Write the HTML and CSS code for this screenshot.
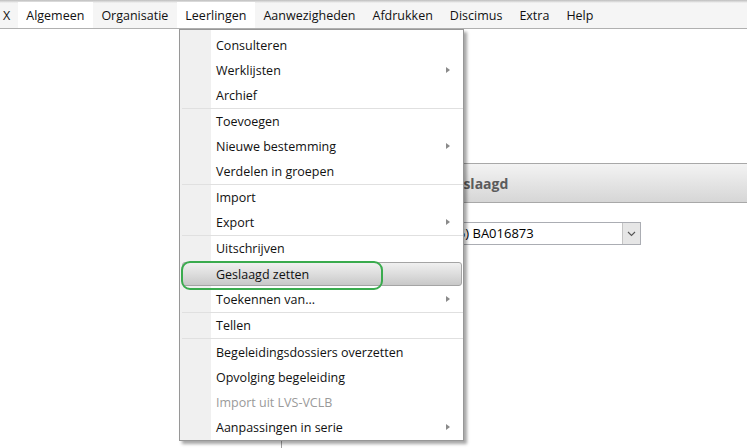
FILE: index.html
```html
<!DOCTYPE html>
<html lang="nl">
<head>
  <meta charset="UTF-8" />
  <title>Leerlingen - Geslaagd zetten</title>
  <link rel="stylesheet" href="styles.css">
</head>
<body>
  <div class="menubar">
    <span class="menubar-item close">X</span>
    <span class="menubar-item is-hover">Algemeen</span>
    <span class="menubar-item">Organisatie</span>
    <span class="menubar-item is-open">Leerlingen</span>
    <span class="menubar-item">Aanwezigheden</span>
    <span class="menubar-item">Afdrukken</span>
    <span class="menubar-item">Discimus</span>
    <span class="menubar-item">Extra</span>
    <span class="menubar-item">Help</span>
  </div>

  <div class="workspace">
    <div class="panel">
      <div class="panel-header"><span class="panel-title">Geslaagd</span></div>
      <div class="panel-body">
        <div class="combo">
          <span class="combo-text">(6) BA016873</span>
          <span class="combo-button">
            <svg width="9" height="6" viewBox="0 0 9 6"><path d="M1 1 L4.5 4.5 L8 1" fill="none" stroke="#555" stroke-width="1.1"/></svg>
          </span>
        </div>
      </div>
    </div>
  </div>

  <!-- opened dropdown of "Leerlingen" -->
  <div class="popup">
    <div class="item">Consulteren</div>
    <div class="item has-sub">Werklijsten</div>
    <div class="item">Archief</div>
    <div class="sep"></div>
    <div class="item">Toevoegen</div>
    <div class="item has-sub">Nieuwe bestemming</div>
    <div class="item">Verdelen in groepen</div>
    <div class="sep"></div>
    <div class="item">Import</div>
    <div class="item has-sub">Export</div>
    <div class="sep"></div>
    <div class="item">Uitschrijven</div>
    <div class="item is-active">Geslaagd zetten</div>
    <div class="item has-sub">Toekennen van...</div>
    <div class="sep"></div>
    <div class="item">Tellen</div>
    <div class="sep wide"></div>
    <div class="item">Begeleidingsdossiers overzetten</div>
    <div class="item">Opvolging begeleiding</div>
    <div class="item is-disabled">Import uit LVS-VCLB</div>
    <div class="item has-sub">Aanpassingen in serie</div>
  </div>

  <div class="annotation"></div>
</body>
</html>
```

FILE: styles.css
```css
html, body {
  margin: 0;
  height: 448px;
  overflow: hidden;
  background: #fff;
  font-family: "Open Sans", "Noto Sans", sans-serif;
  font-size: 12.5px;
  color: #111;
}

/* menu bar */
.menubar {
  display: flex;
  height: 29px;
  box-sizing: border-box;
  padding-top: 2px;
  background: linear-gradient(#bdbdbd 0, #e2e2e2 2px, #f5f5f5 3px, #f5f5f5);
  border-bottom: 1px solid #b0b0b0;
}
.menubar-item {
  height: 26px;
  line-height: 28px;
  padding: 0 9px 0 8px;
  white-space: nowrap;
}
.menubar-item.close {
  padding: 0 8px 0 3px;
}
.menubar-item.is-hover,
.menubar-item.is-open {
  background: #fff;
}

/* page behind the menu */
.workspace {
  padding: 134px 0 0 281px;
}
.panel {
  border-left: 1px solid #a0a0a0;
  height: 300px;
}
.panel-header {
  height: 38px;
  border-top: 1px solid #a8a8a8;
  border-bottom: 1px solid #a8a8a8;
  background: linear-gradient(#f3f3f3, #d6d6d6);
  display: flex;
  align-items: center;
  padding-left: 163px;
}
.panel-title {
  font-weight: bold;
  font-size: 14px;
  color: #5c5c5c;
}
.panel-body {
  padding: 19px 0 0 169px;
}
.combo {
  display: flex;
  width: 190px;
  height: 23px;
  box-sizing: border-box;
  border: 1px solid #abadb3;
  background: #fff;
}
.combo-text {
  flex: 1;
  line-height: 20px;
  padding-left: 2px;
  font-size: 13px;
  color: #000;
}
.combo-button {
  width: 17px;
  display: flex;
  align-items: center;
  justify-content: center;
  background: #e6e6e6;
  border-left: 1px solid #c4c4c4;
}

/* dropdown */
.popup {
  position: absolute;
  left: 179px;
  top: 29px;
  width: 285px;
  box-sizing: border-box;
  padding-top: 3px;
  border: 1px solid #979797;
  background: linear-gradient(90deg, #f0f0f0 31px, #fff 31px);
  box-shadow: 3px 3px 3px rgba(0, 0, 0, 0.35);
}
.item {
  position: relative;
  height: 25px;
  line-height: 25px;
  padding-left: 36px;
  white-space: nowrap;
}
.item.has-sub::after {
  content: "";
  position: absolute;
  right: 13px;
  top: 9px;
  border-left: 4px solid #8a8a8a;
  border-top: 3.5px solid transparent;
  border-bottom: 3.5px solid transparent;
}
.item.is-disabled {
  color: #9a9a9a;
}
.item.is-active {
  z-index: 0;
  margin-top: 1px;
}
.item.is-active::before {
  content: "";
  position: absolute;
  z-index: -1;
  left: 2px;
  right: 1px;
  top: 0;
  bottom: 1px;
  border: 1px solid #a4a4a4;
  border-radius: 3px;
  background: linear-gradient(#f0f0f0, #d9d9d9 60%, #c8c8c8);
}
.sep {
  height: 1px;
  margin-left: 2px;
  background: #e0e0e0;
}
.sep.wide {
  margin-bottom: 1px;
}

/* green marker drawn on the screenshot */
.annotation {
  position: absolute;
  left: 181px;
  top: 261px;
  width: 202px;
  height: 29px;
  box-sizing: border-box;
  border: 2px solid #3aab4e;
  border-radius: 9px;
}
```
